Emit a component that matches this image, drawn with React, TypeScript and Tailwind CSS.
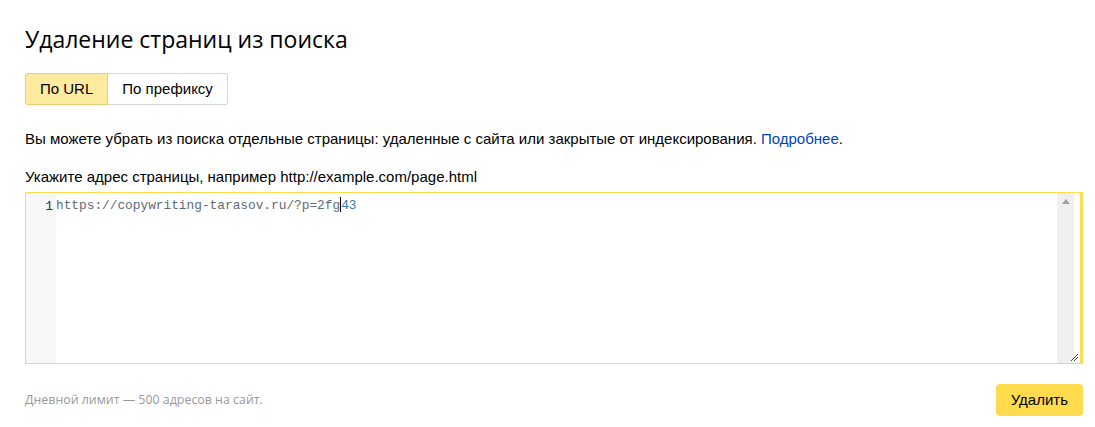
export default function App() {
  return (
    <div className="w-[1095px] h-[427px] bg-white pl-[25px] pr-[12px] pt-[24px] overflow-hidden" style={{ fontFamily: '"Liberation Sans", Arial, sans-serif' }}>
      <h1 className="text-[23px] leading-[30px] text-[#000] font-normal" style={{ fontFamily: '"Open Sans", "Noto Sans", sans-serif' }}>
        Удаление страниц из поиска
      </h1>
      <div className="mt-[19px] flex h-[32px] w-fit text-[15px] text-[#000]">
        <button className="px-[14px] h-full bg-[#ffeba0] border border-[#e5cd72] rounded-l-[3px]">По URL</button>
        <button className="px-[14px] h-full bg-white border border-l-0 border-[#d6d6d6] rounded-r-[3px]">По префиксу</button>
      </div>
      <p className="mt-[24px] text-[15px] leading-[20px] text-[#000]">
        Вы можете убрать из поиска отдельные страницы: удаленные с сайта или закрытые от индексирования.{' '}
        <span className="text-[#0044bb]">Подробнее</span>.
      </p>
      <p className="mt-[18px] text-[15px] leading-[20px] text-[#000]">
        Укажите адрес страницы, например http://example.com/page.html
      </p>
      <div className="mt-[5px] h-[172px] w-[1058px] border border-r-[3px] border-[#ffdb4d] flex relative">
        <div className="w-[30px] bg-[#f7f7f7] text-right pr-[3px] pt-[6px] text-[13px] leading-[16px] text-[#333]" style={{ fontFamily: '"Liberation Mono", monospace' }}>
          1
        </div>
        <div className="flex-1 pt-[4px] text-[12.8px] leading-[18px] text-[#5e6a78]" style={{ fontFamily: '"Liberation Mono", "DejaVu Sans Mono", monospace' }}>
          https://copywriting-tarasov.ru/?p=2fg<span className="inline-block w-px h-[15px] bg-black align-[-3px]"></span><span className="text-[#3c73b3]">43</span>
        </div>
        <div className="w-[17px] bg-[#f0f0f0] mr-[6px] flex justify-center pt-[6px]">
          <svg width="8" height="5" viewBox="0 0 8 5"><path d="M0 5 L4 0 L8 5 Z" fill="#a3a3a3" /></svg>
        </div>
        <svg className="absolute right-[1px] bottom-[1px]" width="9" height="9" viewBox="0 0 9 9">
          <path d="M1 8 L8 1 M4 8 L8 4" stroke="#444" strokeWidth="1" />
        </svg>
      </div>
      <div className="mt-[20px] flex items-center justify-between">
        <span className="text-[12.4px] text-[#999]" style={{ fontFamily: '"Open Sans", "Noto Sans", sans-serif' }}>
          Дневной лимит — 500 адресов на сайт.
        </span>
        <button className="h-[32px] px-[15px] bg-[#ffdb4d] rounded-[4px] text-[15px] text-[#000]">Удалить</button>
      </div>
    </div>
  );
}
